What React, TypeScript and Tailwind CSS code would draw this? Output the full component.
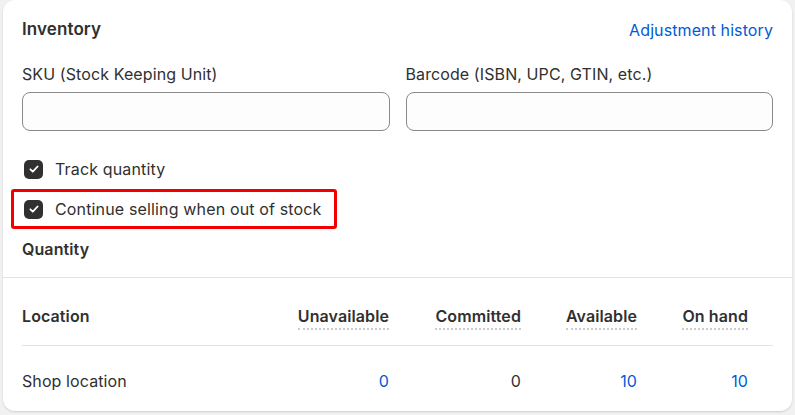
import React from 'react';

const COLS = [
  { label: 'Unavailable', value: '0', link: true, w: 'w-[112px]' },
  { label: 'Committed', value: '0', link: false, w: 'w-[132px]' },
  { label: 'Available', value: '10', link: true, w: 'w-[116px]' },
  { label: 'On hand', value: '10', link: true, w: 'w-[111px]' },
];

function Check() {
  return (
    <span className="ml-[2px] flex h-[19px] w-[19px] shrink-0 items-center justify-center rounded-[5px] bg-[#303030]">
      <svg width="12" height="12" viewBox="0 0 12 12" fill="none">
        <path d="M2.4 6.3l2.4 2.4 4.8-5.2" stroke="#fff" strokeWidth="1.8" strokeLinecap="round" strokeLinejoin="round" />
      </svg>
    </span>
  );
}

export default function App() {
  return (
    <div className="min-h-screen bg-[#f1f1f1] px-[3px] font-['Inter',sans-serif] tracking-[0.1px] text-[#303030]">
      <div className="rounded-xl bg-white pb-[20px] shadow-[0_1px_2px_rgba(0,0,0,0.15)]">
        <div className="px-[19px] pt-[18px]">
          {/* header */}
          <div className="flex h-6 items-center justify-between">
            <h2 className="text-[17px] font-semibold">Inventory</h2>
            <a className="text-[16px] text-[#005bd3]">Adjustment history</a>
          </div>

          {/* sku / barcode */}
          <div className="mt-[22px] grid grid-cols-2 gap-4">
            {['SKU (Stock Keeping Unit)', 'Barcode (ISBN, UPC, GTIN, etc.)'].map(l => (
              <div key={l}>
                <label className="block text-[16px] leading-5">{l}</label>
                <div className="mt-2 h-[39px] rounded-lg border border-[#8a8a8a] bg-[#fdfdfd]" />
              </div>
            ))}
          </div>

          {/* checkboxes */}
          <div className="mt-[18px] flex h-10 items-center gap-3">
            <Check />
            <span className="text-[16px] tracking-[0.15px]">Track quantity</span>
          </div>
          <div className="-ml-[11px] inline-flex h-10 items-center gap-3 rounded-[3px] border-[3px] border-[#f20000] pl-[8px] pr-[12px]">
            <Check />
            <span className="text-[16px] tracking-[0.15px]">Continue selling when out of stock</span>
          </div>

          <div className="mt-[10px] text-[16px] font-semibold leading-5">Quantity</div>
        </div>

        <div className="mt-[18px] border-t border-[#e3e3e3]" />

        {/* table */}
        <div className="px-[19px]">
          <div className="flex border-b border-[#e3e3e3] pb-[15px] pt-[28px] pr-[25px]">
            <div className="flex-1 text-[16px] font-semibold leading-5">Location</div>
            {COLS.map(c => (
              <div key={c.label} className={`${c.w} flex justify-end`}>
                <span className="border-b-2 border-dotted border-[#cccccc] pb-[2px] text-[16px] font-semibold leading-5">
                  {c.label}
                </span>
              </div>
            ))}
          </div>
          <div className="flex pr-[25px] pt-[25px]">
            <div className="flex-1 text-[16px] leading-5">Shop location</div>
            {COLS.map(c => (
              <div
                key={c.label}
                className={`${c.w} text-right text-[16px] leading-5 ${c.link ? 'text-[#005bd3]' : 'text-[#303030]'}`}
              >
                {c.value}
              </div>
            ))}
          </div>
        </div>
      </div>
    </div>
  );
}
